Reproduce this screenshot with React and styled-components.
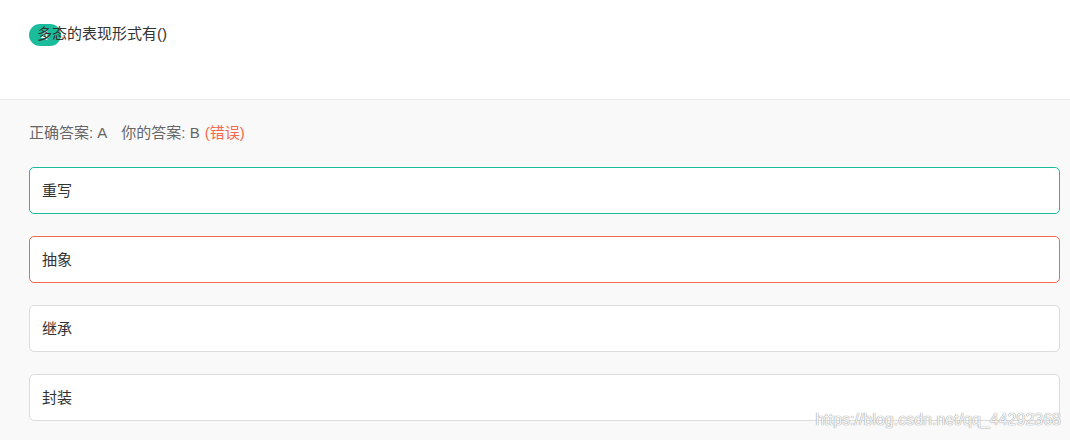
import React from 'react';
import styled, { createGlobalStyle, css } from 'styled-components';

const GlobalStyle = createGlobalStyle`
  html, body {
    margin: 0;
    padding: 0;
    background: #f9f9f9;
  }
  body {
    font-family: 'Liberation Sans', 'Noto Sans CJK SC', sans-serif;
    font-size: 15px;
  }
`;

const options = [
  { text: '重写', state: 'right' },
  { text: '抽象', state: 'wrong' },
  { text: '继承', state: 'normal' },
  { text: '封装', state: 'normal' },
];

const App = () => (
  <>
    <GlobalStyle />
    <Page>
      <QuestionHead>
        <Badge>4</Badge>
        <Title>多态的表现形式有()</Title>
      </QuestionHead>
      <AnswerArea>
        <Result>
          正确答案: A<Gap />你的答案: B <Wrong>(错误)</Wrong>
        </Result>
        <OptionList>
          {options.map((o) => (
            <Option key={o.text} $state={o.state}>
              {o.text}
            </Option>
          ))}
        </OptionList>
      </AnswerArea>
      <Watermark>https://blog.csdn.net/qq_44292368</Watermark>
    </Page>
  </>
);

export default App;

const Page = styled.div`
  position: relative;
  width: 100%;
  height: 440px;
  overflow: hidden;
  background: #f9f9f9;
`;

const QuestionHead = styled.div`
  position: relative;
  height: 100px;
  background: #fff;
  border-bottom: 1px solid #ececec;
  box-sizing: border-box;
  padding: 24px 0 0 37px;
`;

const Badge = styled.span`
  position: absolute;
  left: 29px;
  top: 24px;
  width: 32px;
  height: 22px;
  border-radius: 11px;
  background: #1abc9c;
  color: #fff;
  font-size: 14px;
  line-height: 22px;
  text-align: center;
`;

const Title = styled.div`
  position: relative;
  color: #333;
  font-size: 15px;
  line-height: 20px;
`;

const AnswerArea = styled.div`
  padding: 23px 10px 0 29px;
`;

const Result = styled.div`
  color: #666;
  font-size: 15px;
  line-height: 20px;
`;

const Gap = styled.span`
  display: inline-block;
  width: 14px;
`;

const Wrong = styled.span`
  color: #f4694c;
  margin-left: 1px;
`;

const OptionList = styled.div`
  display: flex;
  flex-direction: column;
  gap: 22px;
  margin-top: 24px;
`;

const Option = styled.div`
  height: 47px;
  box-sizing: border-box;
  border: 1px solid #dcdcdc;
  border-radius: 5px;
  background: #fff;
  padding: 0 12px 2px;
  display: flex;
  align-items: center;
  color: #333;
  font-size: 15px;
  ${(p) =>
    p.$state === 'right' &&
    css`
      border-color: #1abc9c;
    `}
  ${(p) =>
    p.$state === 'wrong' &&
    css`
      border-color: #f26a4c;
    `}
`;

const Watermark = styled.div`
  position: absolute;
  right: 9px;
  top: 411px;
  color: rgba(255, 255, 255, 0.9);
  font-size: 16px;
  text-shadow: 0 0 1px #999, 0 0 1px #aaa;
`;
